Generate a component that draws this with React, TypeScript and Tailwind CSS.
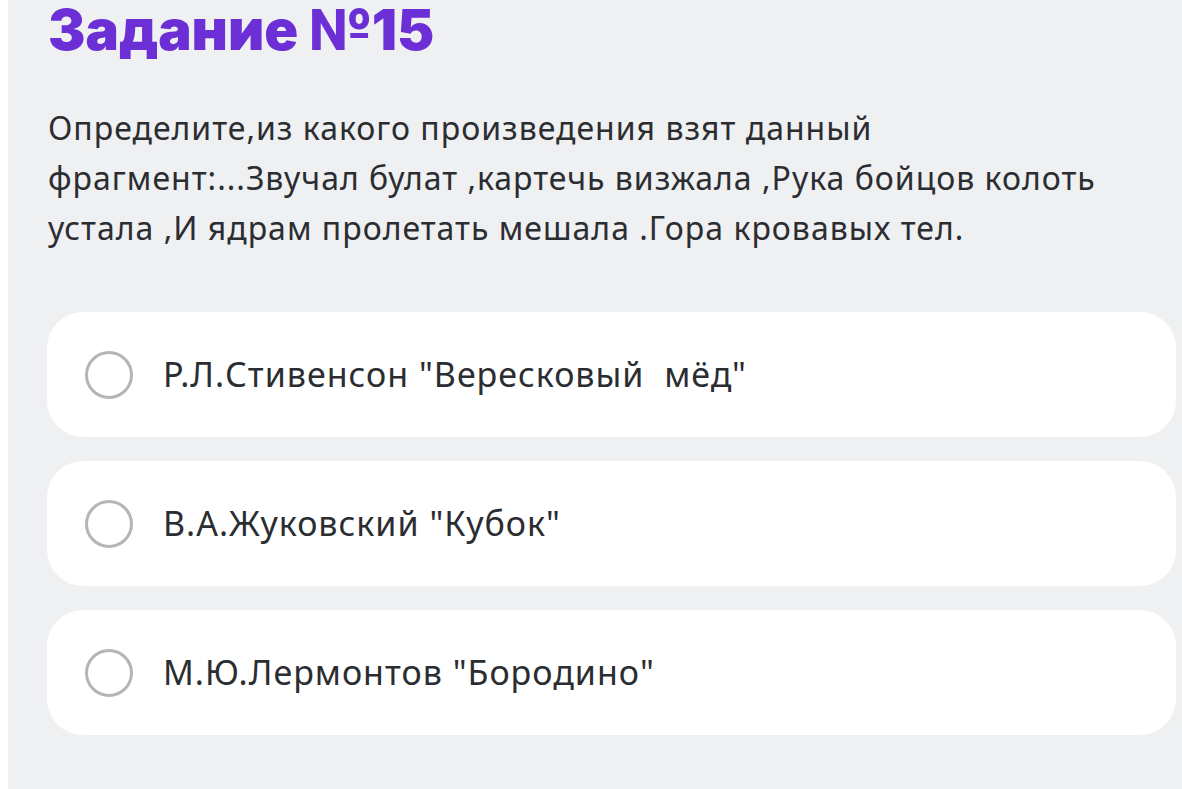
const OPTIONS = [
  'Р.Л.Стивенсон "Вересковый  мёд"',
  'В.А.Жуковский "Кубок"',
  'М.Ю.Лермонтов "Бородино"',
];

const App = () => {
  return (
    <div className="bg-white min-h-[789px] flex">
      <main className="ml-[8px] flex-1 bg-[#eff0f2] min-h-[789px] pl-[40px] pr-[6px]">
        <h1 className="-mt-[4px] font-['Inter',sans-serif] font-black text-[56px] leading-[68px] text-[#6c2fd6]">
          Задание №15
        </h1>
        <p className="mt-[39px] font-['Noto_Sans',sans-serif] text-[32px] leading-[50px] tracking-[1px] text-[#2b2d31] whitespace-pre-line">
          {"Определите,из какого произведения взят данный\nфрагмент:...Звучал булат ,картечь визжала ,Рука бойцов колоть\nустала ,И ядрам пролетать мешала .Гора кровавых тел."}
        </p>
        <ul className="mt-[59px] flex flex-col gap-[24px]">
          {OPTIONS.map((opt) => (
            <li
              key={opt}
              className="h-[125px] bg-white rounded-[36px] flex items-center gap-[30px] pl-[38px] -ml-px"
            >
              <span className="w-[48px] h-[48px] rounded-full border-[3.5px] border-[#b5b5b5] flex-shrink-0" />
              <span className="font-['Noto_Sans',sans-serif] text-[34px] tracking-[1px] text-[#2b2d31] whitespace-pre">
                {opt}
              </span>
            </li>
          ))}
        </ul>
      </main>
    </div>
  );
};

export default App;
